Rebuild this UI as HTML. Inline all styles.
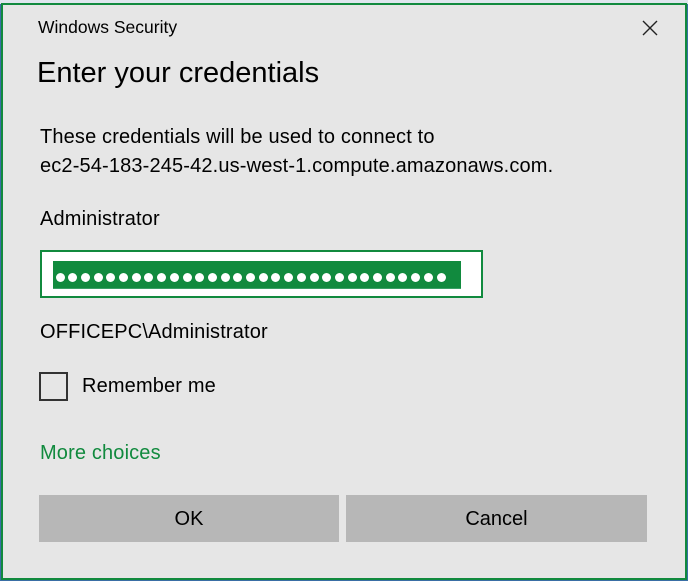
<!DOCTYPE html>
<html><head><meta charset="utf-8"><style>
*{margin:0;padding:0;box-sizing:border-box}
body{width:688px;height:581px;background:#3a6ea5;position:relative;overflow:hidden;font-family:"Liberation Sans",sans-serif;color:#000}
.win{position:absolute;left:1px;top:3px;width:686px;height:577px;background:#e6e6e6;border:2px solid #118a3e}
.t{position:absolute;white-space:nowrap}
.b{font-size:20px;letter-spacing:0.15px}
.dots{position:absolute;left:53px;top:261px;width:408px;height:28px;background:#118a3e;border-bottom:1px solid #3aa066}
.dot{position:absolute;top:12px;width:9px;height:9px;border-radius:50%;background:#fff}
.pw{position:absolute;left:40px;top:250px;width:443px;height:48px;background:#fff;border:2px solid #118a3e}
.btn{position:absolute;top:495px;height:47px;background:#b7b7b7;font-size:20px;text-align:center;line-height:49px}
</style></head><body>
<div style="position:absolute;left:0;top:0;width:688px;height:4px;background:#dfe6ee"></div>
<div class="win"></div>
<div class="t" style="left:38px;top:17px;font-size:17.5px">Windows Security</div>
<svg style="position:absolute;left:642px;top:20px" width="16" height="16"><path d="M1 1L15 15M15 1L1 15" stroke="#222" stroke-width="1.4"/></svg>
<div class="t" style="left:37px;top:57px;font-size:29px">Enter your credentials</div>
<div class="t b" style="left:40px;top:126px">These credentials will be used to connect to</div>
<div class="t b" style="left:40px;top:155px">ec2-54-183-245-42.us-west-1.compute.amazonaws.com.</div>
<div class="t b" style="left:40px;top:208px">Administrator</div>
<div class="pw"></div>
<div class="dots" id="d"></div>
<div class="t b" style="left:40px;top:321px">OFFICEPC\Administrator</div>
<div style="position:absolute;left:39px;top:372px;width:29px;height:29px;border:2px solid #333"></div>
<div class="t b" style="left:82px;top:375px">Remember me</div>
<div class="t b" style="left:40px;top:442px;color:#118a3e">More choices</div>
<div class="btn" style="left:39px;width:300px">OK</div>
<div class="btn" style="left:346px;width:301px">Cancel</div>
<script>
var d=document.getElementById('d');for(var i=0;i<31;i++){var e=document.createElement('div');e.className='dot';e.style.left=(2.5+i*12.7)+'px';d.appendChild(e);}
</script>
</body></html>
